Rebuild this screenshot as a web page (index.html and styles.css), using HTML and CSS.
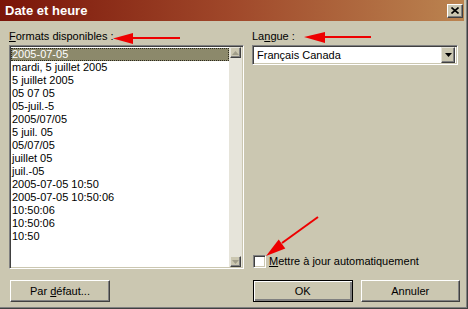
FILE: index.html
```html
<!DOCTYPE html>
<html lang="fr">
<head>
  <meta charset="UTF-8">
  <title>Date et heure</title>
  <link rel="stylesheet" href="styles.css">
</head>
<body>

  <div class="window">
    <div class="titlebar">
      <span class="title">Date et heure</span>
      <span class="close-btn">
        <svg width="8" height="7" viewBox="0 0 8 7"><path d="M0.5 0.5 L7.5 6.5 M7.5 0.5 L0.5 6.5" stroke="#000" stroke-width="1.6"/></svg>
      </span>
    </div>

    <div class="main">
      <div class="col">
        <label class="label"><u>F</u>ormats disponibles :</label>
        <div class="listbox">
          <ul class="items">
            <li class="selected">2005-07-05</li>
            <li>mardi, 5 juillet 2005</li>
            <li>5 juillet 2005</li>
            <li>05 07 05</li>
            <li>05-juil.-5</li>
            <li>2005/07/05</li>
            <li>5 juil. 05</li>
            <li>05/07/05</li>
            <li>juillet 05</li>
            <li>juil.-05</li>
            <li>2005-07-05 10:50</li>
            <li>2005-07-05 10:50:06</li>
            <li>10:50:06</li>
            <li>10:50:06</li>
            <li>10:50</li>
          </ul>
          <div class="scrollbar">
            <span class="scroll-btn"><svg width="7" height="4" viewBox="0 0 7 4"><path d="M3.5 0 L7 4 L0 4 Z" fill="#a09d8a"/></svg></span>
            <span class="scroll-btn"><svg width="7" height="4" viewBox="0 0 7 4"><path d="M0 0 L7 0 L3.5 4 Z" fill="#a09d8a"/></svg></span>
          </div>
        </div>
      </div>

      <div class="col">
        <label class="label">La<u>n</u>gue :</label>
        <div class="combo">
          <span class="combo-text">Français Canada</span>
          <span class="combo-btn"><svg width="7" height="4" viewBox="0 0 7 4"><path d="M0 0 L7 0 L3.5 4 Z" fill="#000"/></svg></span>
        </div>
        <div class="check-row">
          <span class="checkbox"></span>
          <span><u>M</u>ettre à jour automatiquement</span>
        </div>
      </div>
    </div>

    <div class="buttons">
      <div class="col">
        <button class="btn">Par <u>d</u>éfaut...</button>
      </div>
      <div class="col btn-group">
        <button class="btn default">OK</button>
        <button class="btn">Annuler</button>
      </div>
    </div>

    <svg class="annotations" width="468" height="309" viewBox="0 0 468 309">
      <g stroke="#ee0000" stroke-width="2" fill="none">
        <path d="M180 38 L128 38"/>
        <path d="M371 37 L320 37"/>
        <path d="M318 217 L282 243"/>
      </g>
      <g fill="#ee0000">
        <path d="M113 38.5 L133 33 L133 44 Z"/>
        <path d="M304 37 L325 32 L325 43 Z"/>
        <path d="M266 256 L285.3 248.4 L278.7 239.6 Z"/>
      </g>
    </svg>
  </div>

</body>
</html>
```

FILE: styles.css
```css
body {
  margin: 0;
  font-family: "Liberation Sans", Arial, sans-serif;
  font-size: 11px;
  color: #000;
}

.window {
  position: relative;
  width: 468px;
  height: 309px;
  box-sizing: border-box;
  background-color: #cbc7b1;
  border-right: 1px solid #404040;
  border-bottom: 1px solid #404040;
  box-shadow: inset -1px -1px 0 #808080;
}

.titlebar {
  height: 21px;
  width: 464px;
  box-sizing: border-box;
  padding: 0 1px 0 5px;
  display: flex;
  align-items: center;
  justify-content: space-between;
  background: linear-gradient(to right, #7a1509, #a0482a 50%, #bb8450);
}

.title {
  color: white;
  font-weight: bold;
  font-size: 13px;
}

.close-btn {
  width: 16px;
  height: 14px;
  box-sizing: border-box;
  display: flex;
  align-items: center;
  justify-content: center;
  background-color: #cbc7b1;
  border-top: 1px solid #fff;
  border-left: 1px solid #fff;
  border-right: 1px solid #404040;
  border-bottom: 1px solid #404040;
  box-shadow: inset -1px -1px 0 #808080;
}

.main {
  display: grid;
  grid-template-columns: 235px 208px;
  column-gap: 8px;
  padding: 9px 0 0 9px;
  height: 248px;
  box-sizing: border-box;
}

.col {
  display: flex;
  flex-direction: column;
}

.label {
  line-height: 13px;
  margin-bottom: 2px;
}

.listbox {
  height: 224px;
  box-sizing: border-box;
  display: flex;
  background-color: white;
  border-top: 1px solid #808080;
  border-left: 1px solid #808080;
  border-right: 1px solid #fff;
  border-bottom: 1px solid #fff;
  box-shadow: inset 1px 1px 0 #404040, inset -1px -1px 0 #cbc7b1;
  padding: 1px;
}

.items {
  flex: 1;
  list-style: none;
  margin: 0;
  padding: 1px 0 0 0;
}

.items li {
  height: 13px;
  line-height: 13px;
  padding-left: 1px;
  white-space: nowrap;
}

.items li.selected {
  background-color: #8c896b;
  color: white;
  outline: 1px dotted #2c2a1e;
  outline-offset: -1px;
}

.scrollbar {
  width: 12px;
  display: flex;
  flex-direction: column;
  justify-content: space-between;
  background-color: #e6e4da;
  padding-left: 1px;
}

.scroll-btn {
  width: 11px;
  height: 11px;
  box-sizing: border-box;
  display: flex;
  align-items: center;
  justify-content: center;
  background-color: #cbc7b1;
  border-top: 1px solid #e6e4da;
  border-left: 1px solid #e6e4da;
  border-right: 1px solid #404040;
  border-bottom: 1px solid #404040;
  box-shadow: inset -1px -1px 0 #808080;
}

.combo {
  height: 20px;
  width: 206px;
  box-sizing: border-box;
  display: flex;
  align-items: center;
  background-color: white;
  border-top: 1px solid #808080;
  border-left: 1px solid #808080;
  border-right: 1px solid #fff;
  border-bottom: 1px solid #fff;
  box-shadow: inset 1px 1px 0 #404040, inset -1px -1px 0 #cbc7b1;
  padding: 2px;
}

.combo-text {
  flex: 1;
  padding-left: 2px;
}

.combo-btn {
  width: 14px;
  height: 16px;
  box-sizing: border-box;
  display: flex;
  align-items: center;
  justify-content: center;
  background-color: #cbc7b1;
  border-top: 1px solid #e6e4da;
  border-left: 1px solid #e6e4da;
  border-right: 1px solid #404040;
  border-bottom: 1px solid #404040;
  box-shadow: inset -1px -1px 0 #808080;
}

.check-row {
  margin-top: auto;
  margin-bottom: 1px;
  margin-left: 1px;
  display: flex;
  align-items: center;
  gap: 3px;
  line-height: 13px;
}

.checkbox {
  width: 13px;
  height: 13px;
  box-sizing: border-box;
  background-color: white;
  border-top: 1px solid #808080;
  border-left: 1px solid #808080;
  border-right: 1px solid #fff;
  border-bottom: 1px solid #fff;
  box-shadow: inset 1px 1px 0 #404040, inset -1px -1px 0 #cbc7b1;
}

.buttons {
  display: grid;
  grid-template-columns: 235px 208px;
  column-gap: 8px;
  padding: 11px 0 0 9px;
}

.btn-group {
  flex-direction: row;
  gap: 7px;
}

.btn {
  width: 100px;
  height: 22px;
  margin-left: 1px;
  font-family: inherit;
  font-size: 11px;
  color: #000;
  background-color: #cbc7b1;
  border-top: 1px solid #fff;
  border-left: 1px solid #fff;
  border-right: 1px solid #404040;
  border-bottom: 1px solid #404040;
  box-shadow: inset -1px -1px 0 #808080;
  padding: 0;
}

.btn.default {
  border: 1px solid #000;
  box-shadow: inset 1px 1px 0 #fff, inset -2px -2px 0 #808080;
}

.annotations {
  position: absolute;
  left: 0;
  top: 0;
  pointer-events: none;
}
```
